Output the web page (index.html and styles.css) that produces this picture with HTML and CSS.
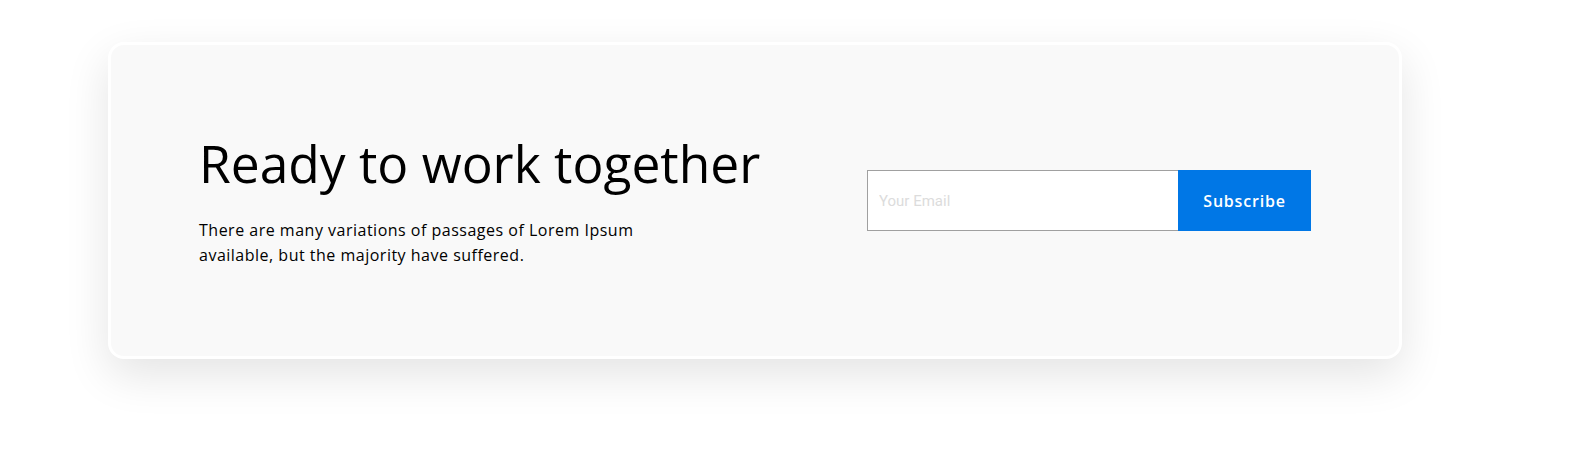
FILE: index.html
```html
<!DOCTYPE html>
<html lang="en">
<head>
<meta charset="utf-8">
<title>Ready to work together</title>
<link rel="stylesheet" href="styles.css">
</head>
<body>
<section class="page">
  <div class="card">
    <div class="intro">
      <h1 class="title">Ready to work together</h1>
      <p class="text">There are many variations of passages of Lorem Ipsum available, but the majority have suffered.</p>
    </div>
    <form class="subscribe">
      <input class="email" type="email" placeholder="Your Email">
      <button class="btn" type="button">Subscribe</button>
    </form>
  </div>
</section>
</body>
</html>
```

FILE: styles.css
```css
* { box-sizing: border-box; }
html, body { margin: 0; padding: 0; background: #fff; }
body { font-family: "Open Sans", "Liberation Sans", sans-serif; color: #000; }
.page { padding: 42px 0 100px 108px; }
.card {
  width: 1294px;
  height: 317px;
  background: #f9f9f9;
  border: 3px solid #fff;
  border-radius: 16px;
  box-shadow: 0 16px 45px rgba(0,0,0,0.11);
  display: flex;
  align-items: center;
  justify-content: space-between;
  padding: 0 88px 0 88px;
}
.intro { margin-top: 0; }
.title {
  margin: 0;
  font-size: 51.5px;
  font-weight: 400;
  line-height: 1.2;
  letter-spacing: 0;
}
.text {
  margin: 24px 0 0;
  width: 460px;
  font-size: 16px;
  letter-spacing: 0.5px;
  line-height: 25px;
}
.subscribe { display: flex; height: 61px; }
.email {
  width: 311px;
  height: 61px;
  border: 1px solid #a0a0a0;
  border-right: none;
  background: #fff;
  padding: 0 11px;
  font-family: "Roboto", sans-serif;
  font-size: 15px;
  outline: none;
}
.email::placeholder { color: #dcdcdc; }
.btn {
  width: 133px;
  height: 61px;
  border: none;
  background: #0077e6;
  color: #fff;
  font-family: "Open Sans", sans-serif;
  font-weight: 600;
  font-size: 16px;
  letter-spacing: 0.8px;
}
```
